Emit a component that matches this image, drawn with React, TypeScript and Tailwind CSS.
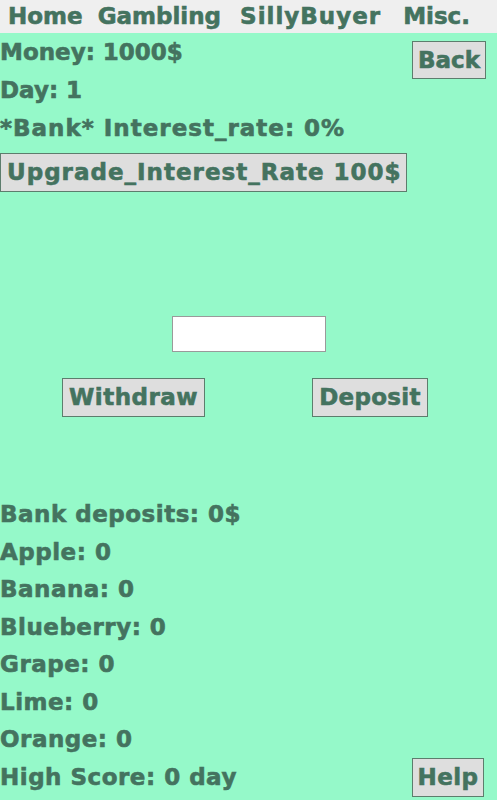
import { useState } from 'react';

const font = { fontFamily: '"DejaVu Sans", "Liberation Sans", sans-serif' };

const btn =
  'bg-[#dedede] border border-[#5d7d6d] text-[#44735f] leading-none [-webkit-text-stroke:0.6px_#44735f]';

export default function App() {
  const [amount, setAmount] = useState('');

  const items = [
    'Bank deposits: 0$',
    'Apple: 0',
    'Banana: 0',
    'Blueberry: 0',
    'Grape: 0',
    'Lime: 0',
    'Orange: 0',
  ];

  return (
    <div
      className="w-[500px] h-[805px] bg-white text-[#44735f] font-bold [-webkit-text-stroke:0.6px_#44735f]"
      style={font}
    >
      {/* NAV */}
      <nav className="w-[497px] h-[33px] bg-[#efefef] flex items-center text-[23px] leading-none">
        <span className="ml-[8px]">Home</span>
        <span className="ml-[15px]">Gambling</span>
        <span className="ml-[19px] tracking-[1px]">SillyBuyer</span>
        <span className="ml-[22px]">Misc.</span>
      </nav>

      <main className="w-[497px] h-[767px] bg-[#95f9c9] flex flex-col text-[23px]">
        {/* TOP STATS */}
        <div className="flex justify-between">
          <div className="flex flex-col">
            <p className="h-[38px] leading-[38px]">Money: 1000$</p>
            <p className="h-[38px] leading-[38px]">Day: 1</p>
            <p className="h-[38px] leading-[38px] tracking-[1px]">*Bank* Interest_rate: 0%</p>
          </div>
          <button className={`mt-[8px] mr-[11px] w-[74px] h-[38px] ${btn}`}>Back</button>
        </div>

        <div className="mt-[6px]">
          <button className={`w-[407px] h-[39px] text-left pl-[6px] tracking-[1px] ${btn}`}>
            Upgrade_Interest_Rate 100$
          </button>
        </div>

        {/* AMOUNT */}
        <div className="mt-[124px] flex justify-center">
          <input
            value={amount}
            onChange={(e) => setAmount(e.target.value)}
            className="w-[154px] h-[36px] bg-white border border-[#9a9a9a] outline-none px-2 text-base [-webkit-text-stroke:0px]"
          />
        </div>

        <div className="mt-[26px] flex">
          <button className={`ml-[62px] w-[143px] h-[39px] tracking-[0.5px] ${btn}`}>Withdraw</button>
          <button className={`ml-[107px] w-[116px] h-[39px] tracking-[0.3px] ${btn}`}>Deposit</button>
        </div>

        {/* INVENTORY */}
        <div className="mt-[79px] flex flex-col tracking-[0.5px]">
          {items.map((t) => (
            <p key={t} className="h-[37.5px] leading-[37.5px]">{t}</p>
          ))}
          <div className="h-[37.5px] flex items-center justify-between">
            <p className="leading-[37.5px]">High Score: 0 day</p>
            <button className={`mr-[13px] w-[72px] h-[39px] ${btn}`}>Help</button>
          </div>
        </div>
      </main>
    </div>
  );
}
